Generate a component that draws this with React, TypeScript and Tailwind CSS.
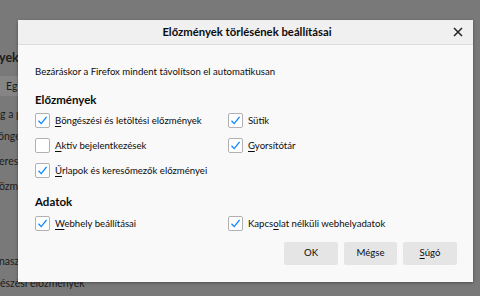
import React from "react";

const font = { fontFamily: 'Lato, "Noto Sans", sans-serif' };

function Check({ checked }: { checked: boolean }) {
  return (
    <span className="w-[15px] h-[15px] shrink-0 border border-[#b1b1b3] bg-white rounded-[2px] flex items-center justify-center">
      {checked && (
        <svg width="11" height="11" viewBox="0 0 11 11">
          <path d="M1.5 5.8 L4.2 8.6 L9.6 1.8" fill="none" stroke="#0a84ff" strokeWidth="1.3" />
        </svg>
      )}
    </span>
  );
}

function Item({ checked, pre, u, post }: { checked: boolean; pre?: string; u?: string; post: string }) {
  return (
    <div className="flex items-center gap-[5px] h-[15px] whitespace-nowrap">
      <Check checked={checked} />
      <span className="text-[9.6px] text-[#0c0c0d] leading-none">
        {pre}
        {u && <span className="underline underline-offset-2">{u}</span>}
        {post}
      </span>
    </div>
  );
}

export default function App() {
  return (
    <div className="relative w-[480px] h-[296px] overflow-hidden bg-[#797979] text-[#1c1c1c]" style={font}>
      <div className="flex flex-col text-[10.5px] leading-none whitespace-nowrap">
        <div className="h-[52px]" />
        <div className="font-bold text-[12.5px] h-[16px] -ml-[1px]">yek</div>
        <div className="h-[8px]" />
        <div className="h-[20px] w-[30px] bg-[#858585] flex items-center pl-[6px]">Eg</div>
        <div className="h-[13px]" />
        <div className="h-[14px]">g a p</div>
        <div className="h-[8px]" />
        <div className="h-[14px] -ml-[2px]">öngé</div>
        <div className="h-[11px]" />
        <div className="h-[14px] -ml-[1px]">ereso</div>
        <div className="h-[11px]" />
        <div className="h-[14px] -ml-[1px]">özm</div>
        <div className="h-[61px]" />
        <div className="h-[14px] -ml-[1px]">nasz</div>
        <div className="h-[8px]" />
        <div className="h-[14px]">észési előzmények</div>
      </div>

      <div className="absolute left-[18px] top-[20px] w-[455px] h-[262px] bg-[#f9f9fa] shadow-[0_1px_3px_rgba(0,0,0,0.35)] flex flex-col">
        <div className="h-[25px] shrink-0 bg-[#f0f0f0] border-b border-[#dcdcdc] flex items-center relative">
          <div className="flex-1 text-center text-[11.3px] font-bold text-[#0c0c0d] pl-[3px]">
            Előzmények törlésének beállításai
          </div>
          <div className="absolute right-[10px] top-[7px]">
            <svg width="10" height="10" viewBox="0 0 10 10">
              <path d="M1 1 L9 9 M9 1 L1 9" stroke="#222" strokeWidth="1.5" />
            </svg>
          </div>
        </div>
        <div className="flex flex-col px-[17px]">
          <div className="h-[21px]" />
          <div className="h-[12px] flex items-center text-[9.6px] text-[#0c0c0d] leading-none whitespace-nowrap">
            Bezáráskor a Firefox mindent távolítson el automatikusan
          </div>
          <div className="h-[15px]" />
          <div className="h-[14px] flex items-center text-[11.5px] font-bold text-[#0c0c0d] leading-none">Előzmények</div>
          <div className="h-[6px]" />
          <div className="grid grid-cols-[193px_1fr] gap-y-[10px]">
            <Item checked pre="" u="B" post="öngészési és letöltési előzmények" />
            <Item checked pre="Sütik" post="" />
            <Item checked={false} pre="" u="A" post="ktív bejelentkezések" />
            <Item checked pre="" u="G" post="yorsítótár" />
            <Item checked pre="" u="Ű" post="rlapok és keresőmezők előzményei" />
            <div />
          </div>
          <div className="h-[17px]" />
          <div className="h-[14px] flex items-center text-[11.5px] font-bold text-[#0c0c0d] leading-none">Adatok</div>
          <div className="h-[7px]" />
          <div className="grid grid-cols-[193px_1fr]">
            <Item checked pre="" u="W" post="ebhely beállításai" />
            <Item checked pre="Kapcs" u="o" post="lat nélküli webhelyadatok" />
          </div>
          <div className="h-[11px]" />
          <div className="flex justify-end gap-[6px] mr-[-1px]">
            <button className="w-[54px] h-[23px] bg-[#e5e5e5] text-[9.6px] text-[#0c0c0d] rounded-[2px]">OK</button>
            <button className="w-[53px] h-[23px] bg-[#e5e5e5] text-[9.6px] text-[#0c0c0d] rounded-[2px]">Mégse</button>
            <button className="w-[54px] h-[23px] bg-[#e5e5e5] text-[9.6px] text-[#0c0c0d] rounded-[2px]">
              <span className="underline underline-offset-2">S</span>úgó
            </button>
          </div>
        </div>
      </div>
    </div>
  );
}
